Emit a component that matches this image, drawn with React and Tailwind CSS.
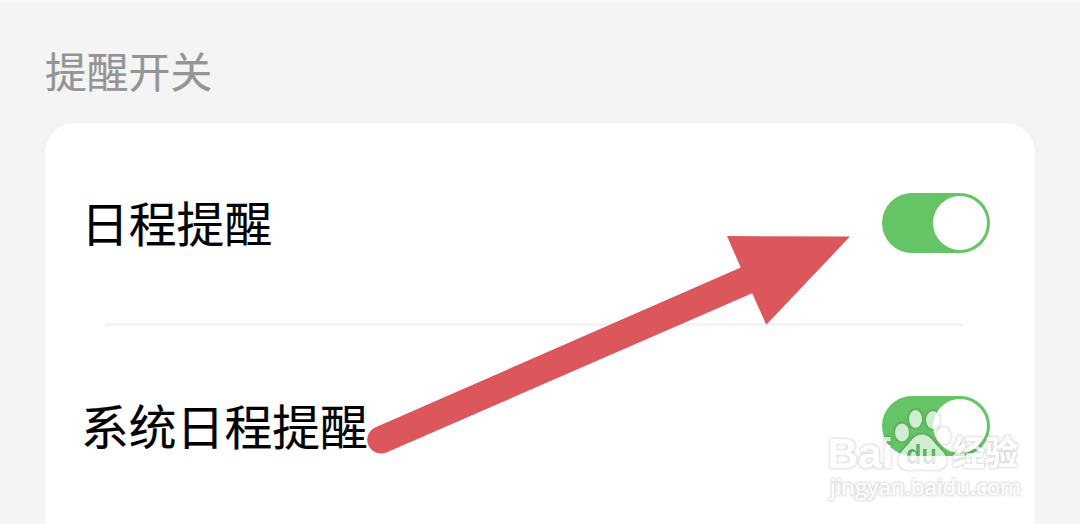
import { useState } from "react";

const FONT = "'Noto Sans CJK SC', 'Noto Sans', sans-serif";

function Toggle({ checked, onChange, label }) {
  return (
    <button
      role="switch"
      aria-checked={checked}
      aria-label={label}
      onClick={onChange}
      className={`w-[108px] h-[60px] p-[3px] rounded-full flex items-center shrink-0 cursor-pointer ${
        checked ? "bg-[#65c466] justify-end" : "bg-[#e5e5ea] justify-start"
      }`}>
      <span className="w-[54px] h-[54px] rounded-full bg-white" />
    </button>
  );
}

function Row({ label, checked, onChange }) {
  return (
    <div className="h-[200px] pl-9 pr-[45px] flex items-center justify-between">
      <span className="text-[47.8px] leading-[60px] text-black pb-[2px] [-webkit-text-stroke:0.2px_#000]">{label}</span>
      <Toggle checked={checked} onChange={onChange} label={label} />
    </div>
  );
}

// Red pointer towards the first switch
function Arrow() {
  return (
    <svg className="absolute left-0 -top-px pointer-events-none" width="1080" height="524" viewBox="0 0 1080 524">
      <path
        fill="#db575b"
        d="M375 427.5 L740.7 267.5 L727 236 L850 236.5 L766.3 324.8 L752.2 293.2 L387 452.2 A13.6 13.6 0 1 1 375 427.5 Z"
      />
    </svg>
  );
}

// Site mark in the bottom right corner
function Watermark() {
  return (
    <svg className="absolute left-[820px] top-[399px] pointer-events-none" width="210" height="110" viewBox="820 400 210 110">
      <defs>
        <filter id="edge" x="-10%" y="-10%" width="120%" height="120%" colorInterpolationFilters="sRGB">
          <feMorphology in="SourceAlpha" operator="dilate" radius="1" result="fat" />
          <feGaussianBlur in="fat" stdDeviation="0.9" result="soft" />
          <feComposite in="soft" in2="SourceAlpha" operator="out" result="ring" />
          <feFlood floodColor="#000" floodOpacity="0.14" />
          <feComposite in2="ring" operator="in" result="halo" />
          <feComponentTransfer in="SourceGraphic" result="fill">
            <feFuncA type="linear" slope="0.7" />
          </feComponentTransfer>
          <feMerge>
            <feMergeNode in="halo" />
            <feMergeNode in="fill" />
          </feMerge>
        </filter>
        <mask id="du" maskUnits="userSpaceOnUse" x="820" y="400" width="210" height="110">
          <rect x="820" y="400" width="210" height="110" fill="#fff" />
          <text x="906" y="464" fontSize="27" textLength="31" lengthAdjust="spacingAndGlyphs"
            fontFamily="'Liberation Sans', sans-serif" fontWeight="700" fill="#000">du</text>
        </mask>
      </defs>
      <g fill="#fff" filter="url(#edge)">
        <text x="827.5" y="468" fontSize="42" textLength="66" lengthAdjust="spacingAndGlyphs"
          fontFamily="'Liberation Sans', sans-serif" fontWeight="700">Bai</text>
        <g mask="url(#du)">
          <path d="M922 434.5 C928 434.5 932 439 935.5 444 C940 449.5 946.5 453 946.5 460.5 C946.5 467 941 470 935 470 C930 470 926 469 922 469 C918 469 915 470 910 470 C903 470 898.5 466 898.5 460 C898.5 453 904 449.5 908.5 444 C912 439 916 434.5 922 434.5 Z" />
        </g>
        <ellipse cx="902" cy="432.5" rx="7" ry="9" />
        <ellipse cx="915.5" cy="419" rx="6.5" ry="9" />
        <ellipse cx="933" cy="420" rx="7" ry="9" />
        <ellipse cx="943.5" cy="436" rx="7" ry="8.5" />
        <text x="952" y="465" fontSize="34" textLength="66" lengthAdjust="spacingAndGlyphs"
          fontFamily="'Noto Sans CJK SC', sans-serif" fontWeight="700">经验</text>
        <text x="830" y="494.5" fontSize="22" textLength="191" lengthAdjust="spacingAndGlyphs"
          fontFamily="'Open Sans', 'Noto Sans', sans-serif">jingyan.baidu.com</text>
      </g>
    </svg>
  );
}

export default function App() {
  const [schedule, setSchedule] = useState(true);
  const [system, setSystem] = useState(true);

  return (
    <div className="relative w-[1080px] h-[524px] overflow-hidden bg-[#f4f4f4] border-t border-[#fafafa] px-[45px] flex flex-col"
      style={{ fontFamily: FONT }}>
      {/* Section title */}
      <h1 className="h-[122px] pt-[39px] text-[41.8px] leading-[60px] font-normal text-[#959595] shrink-0 [-webkit-text-stroke:0.2px_#959595]">提醒开关</h1>

      {/* Settings card */}
      <div className="h-[460px] shrink-0 bg-white rounded-t-[30px]">
        <Row label="日程提醒" checked={schedule} onChange={() => setSchedule(v => !v)} />
        <div className="h-[3px] ml-[60px] mr-[72px] bg-[#f4f4f7]" />
        <Row label="系统日程提醒" checked={system} onChange={() => setSystem(v => !v)} />
      </div>

      <Arrow />
      <Watermark />
    </div>
  );
}
